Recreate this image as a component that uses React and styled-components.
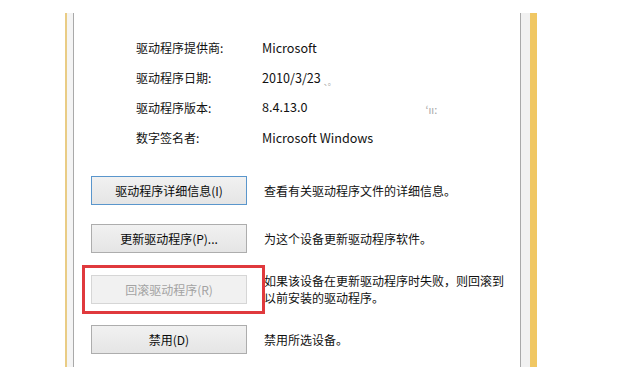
import React from "react";
import styled, { createGlobalStyle } from "styled-components";

const Global = createGlobalStyle`
  html, body { margin: 0; padding: 0; background: #ffffff; }
  body { font-family: "Microsoft YaHei", "Noto Sans CJK SC", "Noto Sans", sans-serif; }
`;

const Page = styled.div`
  width: 624px;
  height: 386px;
  padding: 13px 0 0 65px;
  box-sizing: border-box;
  overflow: hidden;
`;

const Frame = styled.div`
  display: flex;
  width: 472px;
  height: 354px;
`;

const Edge = styled.div`
  width: ${(p) => p.$w}px;
  background: ${(p) => p.$c};
  flex: none;
`;

const Panel = styled.div`
  flex: 1;
  background: #ffffff;
  border-left: 1px solid #a9a9a9;
  border-right: 1px solid #a9a9a9;
  padding-top: 19px;
  box-sizing: border-box;
  color: #111111;
  font-size: 12px;
`;

const InfoGrid = styled.div`
  display: grid;
  grid-template-columns: 126px auto;
  grid-auto-rows: 30px;
  align-items: center;
  margin-left: 62px;
`;

const Label = styled.div`
  font-size: 12px;
  color: #111111;
`;

const Value = styled.div`
  font-size: 12.6px;
  color: #111111;
  white-space: nowrap;
`;

const Smudge = styled.span`
  font-size: ${(p) => p.$fs || 8}px;
  color: #a8a8a8;
  margin-left: ${(p) => p.$ml || 2}px;
  vertical-align: ${(p) => p.$va || "-2px"};
`;

const Actions = styled.div`
  display: flex;
  flex-direction: column;
  gap: 19px;
  margin: 24px 0 0 17px;
`;

const ActionRow = styled.div`
  display: flex;
  align-items: center;
  gap: 17px;
`;

const ButtonWrap = styled.div`
  position: relative;
  flex: none;
`;

const Button = styled.button`
  display: block;
  width: 156px;
  height: 29px;
  box-sizing: border-box;
  margin: 0;
  padding: 0;
  font-family: inherit;
  font-size: 12px;
  color: ${(p) => (p.disabled ? "#a3a3a3" : "#0a0a0a")};
  background: ${(p) =>
    p.disabled ? "#f1f1f1" : "linear-gradient(#f1f1f1, #e5e5e5)"};
  border: 1px solid
    ${(p) => (p.disabled ? "#d6d6d6" : p.$focus ? "#5a96cc" : "#adadad")};
  border-radius: 0;
`;

const Highlight = styled.div`
  position: absolute;
  left: -9px;
  right: -18px;
  top: -10px;
  bottom: -10px;
  border: 3px solid #e0393d;
  pointer-events: none;
`;

const Desc = styled.div`
  width: 246px;
  font-size: 12px;
  line-height: 17px;
  color: #111111;
`;

const info = [
  { l: "驱动程序提供商:", v: "Microsoft" },
  { l: "驱动程序日期:", v: "2010/3/23", s: "、。", ml: 3, fs: 8 },
  { l: "驱动程序版本:", v: "8.4.13.0", s: "ʻıı:", ml: 118, fs: 11 },
  { l: "数字签名者:", v: "Microsoft Windows" },
];

const actions = [
  { label: "驱动程序详细信息(I)", desc: "查看有关驱动程序文件的详细信息。", focus: true },
  { label: "更新驱动程序(P)...", desc: "为这个设备更新驱动程序软件。" },
  {
    label: "回滚驱动程序(R)",
    desc: "如果该设备在更新驱动程序时失败，则回滚到以前安装的驱动程序。",
    disabled: true,
    marked: true,
  },
  { label: "禁用(D)", desc: "禁用所选设备。" },
];

export default function App() {
  return (
    <>
      <Global />
      <Page>
        <Frame>
          <Edge $w={2} $c="#e9cc85" />
          <Edge $w={6} $c="#f4f4f4" />
          <Panel>
            <InfoGrid>
              {info.map((r) => (
                <React.Fragment key={r.l}>
                  <Label>{r.l}</Label>
                  <Value>
                    {r.v}
                    {r.s && (
                      <Smudge $ml={r.ml} $fs={r.fs}>
                        {r.s}
                      </Smudge>
                    )}
                  </Value>
                </React.Fragment>
              ))}
            </InfoGrid>
            <Actions>
              {actions.map((a) => (
                <ActionRow key={a.label}>
                  <ButtonWrap>
                    <Button disabled={a.disabled} $focus={a.focus}>
                      {a.label}
                    </Button>
                    {a.marked && <Highlight />}
                  </ButtonWrap>
                  <Desc>{a.desc}</Desc>
                </ActionRow>
              ))}
            </Actions>
          </Panel>
          <Edge $w={9} $c="#f1f1f1" />
          <Edge $w={7} $c="#f0c763" />
        </Frame>
      </Page>
    </>
  );
}
